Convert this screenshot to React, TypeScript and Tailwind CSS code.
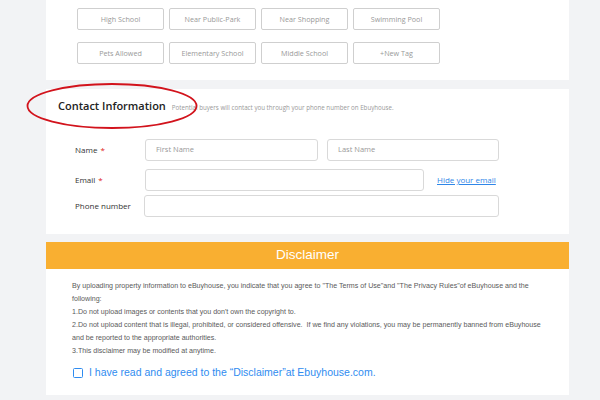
import React from "react";

const tagRows: string[][] = [
  ["High School", "Near Public-Park", "Near Shopping", "Swimming Pool"],
  ["Pets Allowed", "Elementary School", "Middle School", "+New Tag"],
];

const disclaimerLines: string[] = [
  "By uploading property information to eBuyhouse, you indicate that you agree to \"The Terms of Use\"and \"The Privacy Rules\"of eBuyhouse and the",
  "following:",
  "1.Do not upload images or contents that you don't own the copyright to.",
  "2.Do not upload content that is illegal, prohibited, or considered offensive.  If we find any violations, you may be permanently banned from eBuyhouse",
  "and be reported to the appropriate authorities.",
  "3.This disclaimer may be modified at anytime.",
];

function Label({ text, required }: { text: string; required?: boolean }) {
  return (
    <div className="w-[70px] shrink-0 text-[8px] text-[#333]">
      {text}
      {required && <span className="ml-[3px] text-[#e02020]">*</span>}
    </div>
  );
}

function TextInput({ placeholder, className }: { placeholder?: string; className: string }) {
  return (
    <div
      className={`h-[22px] rounded-[3px] border border-[#d9d9d9] bg-white pl-[10px] flex items-center text-[7.5px] text-[#999] ${className}`}
    >
      {placeholder}
    </div>
  );
}

export default function App() {
  return (
    <div
      className="w-[600px] h-[400px] overflow-hidden bg-[#f2f3f5]"
      style={{ fontFamily: '"Open Sans", "Liberation Sans", sans-serif' }}
    >
      <div className="ml-[46px] w-[523px]">
        {/* tags */}
        <div className="bg-white pl-[31px] pt-[8px] pb-[16px] flex flex-col gap-[12px]">
          {tagRows.map((row, i) => (
            <div key={i} className="flex gap-[5px]">
              {row.map((t) => (
                <div
                  key={t}
                  className="w-[87px] h-[22px] rounded-[2px] border border-[#cfcfcf] flex items-center justify-center text-[7.2px] text-[#999]"
                >
                  {t}
                </div>
              ))}
            </div>
          ))}
        </div>

        {/* contact information */}
        <div className="relative mt-[9px] h-[145px] bg-white pt-[10px]">
          <svg
            className="absolute left-[-20px] top-[-7px]"
            width="176"
            height="50"
            viewBox="0 0 176 50"
          >
            <ellipse
              cx="86"
              cy="24"
              rx="84.5"
              ry="22"
              fill="none"
              stroke="#d2131c"
              strokeWidth="1.8"
            />
          </svg>
          <div className="flex items-baseline pl-[12px] h-[14px] leading-[14px]">
            <span className="text-[11px] font-semibold text-[#222]">Contact Information</span>
            <span className="ml-[6px] text-[6.2px] text-[#999]">
              Potential buyers will contact you through your phone number on Ebuyhouse.
            </span>
          </div>

          <div className="mt-[26px] pl-[29px]">
            <div className="flex items-center">
              <Label text="Name" required />
              <TextInput placeholder="First Name" className="w-[173px]" />
              <TextInput placeholder="Last Name" className="ml-[9px] w-[172px]" />
            </div>
            <div className="mt-[8px] flex items-center">
              <Label text="Email" required />
              <TextInput className="w-[279px]" />
              <a className="ml-[13px] text-[8px] text-[#2f86e8] underline">Hide your email</a>
            </div>
            <div className="mt-[4px] flex items-center">
              <Label text="Phone number" />
              <TextInput className="-ml-px w-[355px]" />
            </div>
          </div>
        </div>

        {/* disclaimer */}
        <div className="mt-[8px] h-[153px] bg-white">
          <div
            className="h-[27px] bg-[#f9af31] flex items-center justify-center text-[13.5px] text-white"
            style={{ fontFamily: '"Liberation Sans", Arial, sans-serif' }}
          >
            Disclaimer
          </div>
          <div
            className="pl-[26px] pt-[11px]"
            style={{ fontFamily: '"Liberation Sans", Arial, sans-serif' }}
          >
            {disclaimerLines.map((l, i) => (
              <div key={i} className="h-[13px] leading-[13px] whitespace-pre text-[7.1px] text-[#5a5a5a]">
                {l}
              </div>
            ))}
            <div className="mt-[7px] flex items-center">
              <div className="ml-[1px] w-[10px] h-[10px] rounded-[1.5px] border-[1.5px] border-[#2f8cf0]" />
              <span className="ml-[6px] text-[10.5px] text-[#2f8cf0]">
                I have read and agreed to the “Disclaimer”at Ebuyhouse.com.
              </span>
            </div>
          </div>
        </div>
      </div>
    </div>
  );
}
